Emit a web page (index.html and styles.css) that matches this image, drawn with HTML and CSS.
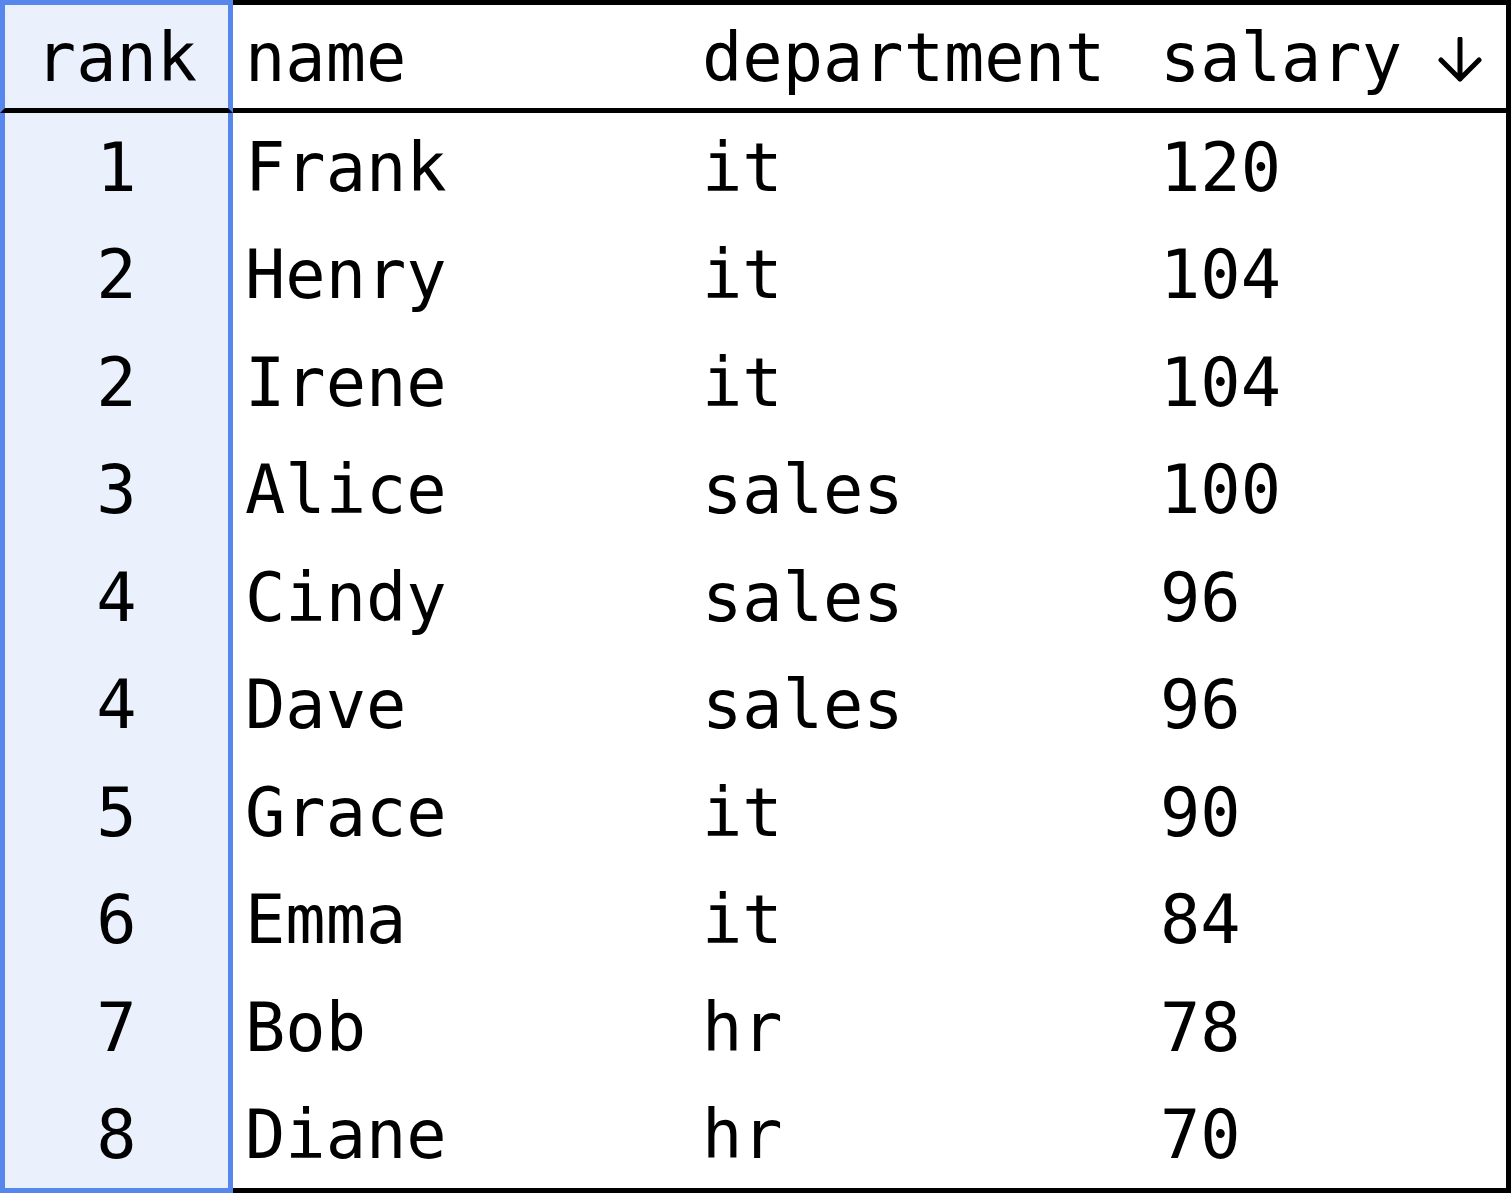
FILE: index.html
```html
<!DOCTYPE html>
<html>
<head>
<meta charset="utf-8">
<link rel="stylesheet" href="styles.css">
</head>
<body>
<table class="grid">
  <thead>
    <tr>
      <th class="rank">rank</th>
      <th class="name">name</th>
      <th class="dept">department</th>
      <th class="salary">salary <svg class="sort-icon" viewBox="0 0 44 46" width="44" height="46" aria-label="sorted descending"><path d="M22 2 V42 M3 23 L22 42 L41 23" fill="none" stroke="#000" stroke-width="5" stroke-linecap="round" stroke-linejoin="round"/></svg></th>
    </tr>
  </thead>
  <tbody>
    <tr><td class="rank">1</td><td>Frank</td><td>it</td><td>120</td></tr>
    <tr><td class="rank">2</td><td>Henry</td><td>it</td><td>104</td></tr>
    <tr><td class="rank">2</td><td>Irene</td><td>it</td><td>104</td></tr>
    <tr><td class="rank">3</td><td>Alice</td><td>sales</td><td>100</td></tr>
    <tr><td class="rank">4</td><td>Cindy</td><td>sales</td><td>96</td></tr>
    <tr><td class="rank">4</td><td>Dave</td><td>sales</td><td>96</td></tr>
    <tr><td class="rank">5</td><td>Grace</td><td>it</td><td>90</td></tr>
    <tr><td class="rank">6</td><td>Emma</td><td>it</td><td>84</td></tr>
    <tr><td class="rank">7</td><td>Bob</td><td>hr</td><td>78</td></tr>
    <tr><td class="rank">8</td><td>Diane</td><td>hr</td><td>70</td></tr>
  </tbody>
</table>
</body>
</html>
```
FILE: styles.css
```css
html, body {
  margin: 0;
  padding: 0;
  background: #ffffff;
}

.grid {
  border-collapse: separate;
  border-spacing: 0;
  table-layout: fixed;
  width: 1511px;
  font-family: "DejaVu Sans Mono", "Liberation Mono", monospace;
  font-size: 67px;
  line-height: 1;
  color: #000;
}

.grid th,
.grid td {
  padding: 3px 0 0 12px;
  text-align: left;
  vertical-align: middle;
  font-weight: normal;
  white-space: nowrap;
}

.grid th {
  height: 100px;
  border-top: 5px solid #000;
  border-bottom: 5px solid #000;
}

.grid td {
  height: 104.5px;
}

.grid th:last-child,
.grid td:last-child {
  border-right: 5px solid #000;
}

.grid tbody tr:last-child td {
  border-bottom: 5px solid #000;
}

.grid th.name { width: 445px; }
.grid th.dept { width: 446px; }

.sort-icon {
  display: inline-block;
  vertical-align: -2px;
  margin-left: -4px;
}

.grid .rank {
  width: 223px;
  padding: 3px 0 0 0;
  text-align: center;
  background: #eaf1fc;
  border-left: 5px solid #5787ec;
  border-right: 5px solid #5787ec;
}

.grid th.rank {
  border-top: 5px solid #5787ec;
  border-bottom: 5px solid #000;
}

.grid tbody tr:last-child td.rank {
  border-bottom: 5px solid #5787ec;
}
```
